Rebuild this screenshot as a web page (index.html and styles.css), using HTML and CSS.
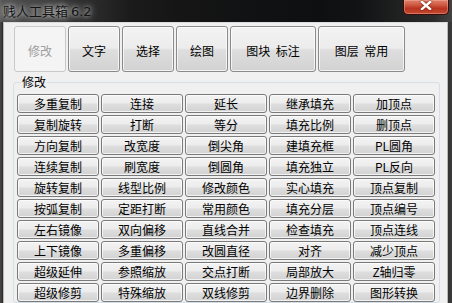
FILE: index.html
```html
<!DOCTYPE html>
<html>
<head>
<meta charset="utf-8">
<link rel="stylesheet" href="styles.css">
</head>
<body>
<div class="window">
  <div class="titlebar">
    <span class="title">贱人工具箱 <span class="ver">6.2</span></span>
    <div class="close"><svg width="12" height="9" viewBox="0 0 12 9"><path d="M2 1 L10 8 M10 1 L2 8" stroke="#fff" stroke-width="2.4" stroke-linecap="square"/></svg></div>
  </div>
  <div class="client">
    <div class="tabs">
      <button class="btn tab active">修改</button>
      <button class="btn tab">文字</button>
      <button class="btn tab">选择</button>
      <button class="btn tab">绘图</button>
      <button class="btn tab wide">图块&nbsp; 标注</button>
      <button class="btn tab wider">图层&nbsp; 常用</button>
    </div>
    <fieldset class="group">
      <legend>修改</legend>
      <div class="grid">
        <button class="btn cell">多重复制</button><button class="btn cell">连接</button><button class="btn cell">延长</button><button class="btn cell">继承填充</button><button class="btn cell">加顶点</button>
        <button class="btn cell">复制旋转</button><button class="btn cell">打断</button><button class="btn cell">等分</button><button class="btn cell">填充比例</button><button class="btn cell">删顶点</button>
        <button class="btn cell">方向复制</button><button class="btn cell">改宽度</button><button class="btn cell">倒尖角</button><button class="btn cell">建填充框</button><button class="btn cell">PL圆角</button>
        <button class="btn cell">连续复制</button><button class="btn cell">刷宽度</button><button class="btn cell">倒圆角</button><button class="btn cell">填充独立</button><button class="btn cell">PL反向</button>
        <button class="btn cell">旋转复制</button><button class="btn cell">线型比例</button><button class="btn cell">修改颜色</button><button class="btn cell">实心填充</button><button class="btn cell">顶点复制</button>
        <button class="btn cell">按弧复制</button><button class="btn cell">定距打断</button><button class="btn cell">常用颜色</button><button class="btn cell">填充分层</button><button class="btn cell">顶点编号</button>
        <button class="btn cell">左右镜像</button><button class="btn cell">双向偏移</button><button class="btn cell">直线合并</button><button class="btn cell">检查填充</button><button class="btn cell">顶点连线</button>
        <button class="btn cell">上下镜像</button><button class="btn cell">多重偏移</button><button class="btn cell">改圆直径</button><button class="btn cell">对齐</button><button class="btn cell">减少顶点</button>
        <button class="btn cell">超级延伸</button><button class="btn cell">参照缩放</button><button class="btn cell">交点打断</button><button class="btn cell">局部放大</button><button class="btn cell">Z轴归零</button>
        <button class="btn cell">超级修剪</button><button class="btn cell">特殊缩放</button><button class="btn cell">双线修剪</button><button class="btn cell">边界删除</button><button class="btn cell">图形转换</button>
      </div>
    </fieldset>
  </div>
</div>
</body>
</html>
```
FILE: styles.css
```css
html, body {
  margin: 0;
  padding: 0;
  width: 452px;
  height: 303px;
  overflow: hidden;
  background: #1a1a1a;
}
.window {
  width: 452px;
  height: 303px;
  display: flex;
  flex-direction: column;
  background: linear-gradient(to right, #4a4a4a 0, #2a2a2a 3px, #151515 40%, #0d0f11 70%, #1a1a1a 96%, #3a3a3a 100%);
  font-family: "Noto Sans CJK SC", "Liberation Sans", sans-serif;
}
.titlebar {
  height: 23px;
  display: flex;
  align-items: flex-start;
  background: linear-gradient(to right, rgba(120,120,120,0.5) 0, rgba(70,70,70,0.4) 80px, rgba(0,0,0,0) 130px, rgba(0,0,0,0) 360px, rgba(80,80,80,0.4) 100%);
}
.title {
  margin: 2px 0 0 3px;
  font-size: 13px;
  line-height: 18px;
  color: #141414;
  white-space: pre;
  text-shadow: 0 0 4px rgba(255,255,255,0.7), 0 0 8px rgba(255,255,255,0.5), 0 0 10px rgba(200,200,200,0.5);
}
.ver {
  font-family: "DejaVu Sans", "Liberation Sans", sans-serif;
  font-size: 13px;
}
.close {
  margin-left: auto;
  margin-right: 3px;
  width: 46px;
  height: 15px;
  box-sizing: border-box;
  border: 1px solid #3a0c08;
  border-top: none;
  border-radius: 0 0 5px 5px;
  background: linear-gradient(#e0806c 0%, #cf5a44 35%, #b8341f 60%, #c44a30 100%);
  box-shadow: inset 0 0 0 1px rgba(255,200,190,0.35);
  display: flex;
  justify-content: center;
  align-items: flex-start;
  padding-top: 1px;
}
.close svg { display: block; filter: drop-shadow(0 0 1px #6a1000); }
.client {
  flex: 1;
  margin: 0 4px 0 3px;
  background: #f0f0f0;
  border-top: 1px solid #dcdcdc;
  border-left: 1px solid #b8b8b8;
  border-right: 1px solid #b8b8b8;
}
.btn {
  font-family: "Noto Sans CJK SC", "Liberation Sans", sans-serif;
  font-size: 12px;
  color: #000;
  padding: 0;
  margin: 0;
  box-sizing: border-box;
  border: 1px solid #707070;
  border-radius: 3px;
  background: linear-gradient(#f3f3f3 0%, #ececec 48%, #dedede 52%, #d2d2d2 100%);
  box-shadow: inset 0 0 0 1px rgba(255,255,255,0.7);
  text-align: center;
  white-space: nowrap;
}
.tabs {
  display: flex;
  gap: 2px;
  margin: 3px 0 0 10px;
  height: 46px;
}
.tab {
  width: 52px;
  height: 46px;
  line-height: 16px;
  padding-top: 3px;
  border-color: #8a8a8a;
}
.tab.wide { width: 86px; }
.tab.wider { width: 87px; }
.tab.active {
  background: #f4f4f4;
  border-color: #c6c9cc;
  color: #9e9e9e;
  box-shadow: none;
}
.group {
  margin: 3px 0 0 9px;
  width: 427px;
  box-sizing: border-box;
  padding: 5px 4px 0 3px;
  border: 1px solid #d5dfe5;
  border-radius: 3px;
}
.group legend {
  padding: 0 1px;
  margin-left: 4px;
  font-size: 12px;
  line-height: 14px;
  color: #000;
}
.grid {
  display: grid;
  grid-template-columns: repeat(5, 82px);
  grid-auto-rows: 19px;
  column-gap: 2px;
  row-gap: 2px;
}
.cell {
  height: 19px;
  line-height: 16px;
  border-color: #7a7a7a;
}
```
